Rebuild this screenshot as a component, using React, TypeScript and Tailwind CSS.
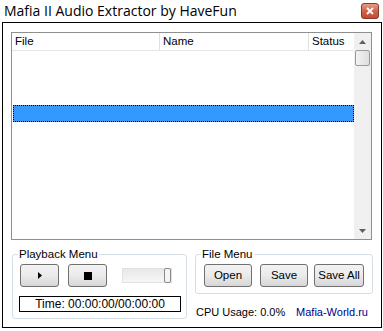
import React from "react"

const sans = { fontFamily: '"Liberation Sans", Arial, sans-serif' }

function Btn({ w, children }: { w: string; children: React.ReactNode }) {
  return (
    <div
      className={`${w} h-[23px] flex items-center justify-center rounded-[3px] border border-[#707070] bg-[#e5e5e5] bg-linear-to-b from-[#f2f2f2] via-[#ebebeb] to-[#d6d6d6] text-[11.5px] text-black`}
    >
      {children}
    </div>
  )
}

function GroupBox({
  label,
  className,
  children,
}: {
  label: string
  className: string
  children: React.ReactNode
}) {
  return (
    <div className={`relative rounded-[3px] border border-[#d5dfe5] ${className}`}>
      <span className="absolute -top-[8px] left-[5px] bg-white px-[1px] text-[11.5px] leading-[14px] text-black">
        {label}
      </span>
      {children}
    </div>
  )
}

function CloseButton() {
  return (
    <svg width="18" height="16" viewBox="0 0 18 16">
      <defs>
        <linearGradient id="cb" x1="0" y1="0" x2="0" y2="1">
          <stop offset="0" stopColor="#e8a08c" />
          <stop offset="0.5" stopColor="#d0634a" />
          <stop offset="1" stopColor="#c24a30" />
        </linearGradient>
      </defs>
      <rect x="0.5" y="0.5" width="17" height="15" rx="2.5" fill="url(#cb)" stroke="#8c3a2c" />
      <path d="M6 5 L12 11 M12 5 L6 11" stroke="white" strokeWidth="1.8" />
    </svg>
  )
}

export default function App() {
  return (
    <div className="w-[383px] h-[331px] bg-white overflow-hidden text-black" style={sans}>
      {/* title bar */}
      <div className="h-[22px] flex items-center justify-between pl-[4px] pr-[4px]">
        <span className="text-[14px] leading-none text-black" style={{ fontFamily: '"Open Sans", sans-serif' }}>
          Mafia II Audio Extractor by HaveFun
        </span>
        <CloseButton />
      </div>

      {/* client */}
      <div className="ml-[2px] w-[380px] h-[306px] border border-black flex flex-col">
        {/* list view */}
        <div className="mt-[9px] ml-[8px] w-[361px] h-[208px] border border-[#8e8f8f] flex">
          <div className="flex-1 flex flex-col">
            <div className="h-[18px] flex border-b border-[#e5e5e5] text-[11.5px] leading-[17px]">
              <div className="w-[148px] border-r border-[#dfdfdf] pl-[3px]">File</div>
              <div className="w-[149px] border-r border-[#dfdfdf] pl-[3px]">Name</div>
              <div className="flex-1 pl-[3px]">Status</div>
            </div>
            <div className="mt-[54px] ml-[1px] h-[17px] bg-[#3399ff] border border-dotted border-black" />
          </div>
          {/* scrollbar */}
          <div className="w-[17px] bg-[#f0f0f0] flex flex-col items-center">
            <div className="h-[17px] flex items-center justify-center">
              <svg width="7" height="4" viewBox="0 0 7 4">
                <path d="M0 4 L3.5 0 L7 4 Z" fill="#606060" />
              </svg>
            </div>
            <div className="w-[15px] h-[16px] rounded-[2px] border border-[#9a9a9a] bg-linear-to-r from-[#f3f3f3] to-[#dedede]" />
            <div className="flex-1" />
            <div className="h-[17px] flex items-center justify-center">
              <svg width="7" height="4" viewBox="0 0 7 4">
                <path d="M0 0 L3.5 4 L7 0 Z" fill="#606060" />
              </svg>
            </div>
          </div>
        </div>

        {/* bottom */}
        <div className="mt-[14px] ml-[9px] flex gap-[8px]">
          <GroupBox label="Playback Menu" className="w-[175px] h-[65px] pt-[9px] pl-[7px]">
            <div className="flex items-center">
              <Btn w="w-[39px]">
                <svg width="4" height="7" viewBox="0 0 4 7">
                  <path d="M0 0 L4 3.5 L0 7 Z" fill="black" />
                </svg>
              </Btn>
              <div className="ml-[9px]">
                <Btn w="w-[39px]">
                  <div className="w-[8px] h-[8px] bg-black" />
                </Btn>
              </div>
              <div className="ml-[15px] w-[50px] h-[15px] bg-linear-to-b from-[#e8e8e8] to-[#f6f6f6] border border-[#e0e0e0] flex justify-end">
                <div className="w-[7px] h-[15px] -mt-px rounded-[2px] border border-[#8a8a8a] bg-[#f4f4f4]" />
              </div>
            </div>
            <div className="mt-[9px] -ml-px w-[162px] h-[16px] border border-black flex items-center justify-center text-[12px] leading-none">
              Time: 00:00:00/00:00:00
            </div>
          </GroupBox>

          <div className="flex flex-col">
            <GroupBox label="File Menu" className="w-[178px] h-[40px] pt-[9px] pl-[8px]">
              <div className="flex">
                <Btn w="w-[48px]">Open</Btn>
                <div className="ml-[8px]">
                  <Btn w="w-[48px]">Save</Btn>
                </div>
                <div className="ml-[6px]">
                  <Btn w="w-[50px]">Save All</Btn>
                </div>
              </div>
            </GroupBox>
            <div className="mt-[11px] flex justify-between pl-[1px] pr-[5px] text-[11px] leading-[14px]">
              <span>CPU Usage: 0.0%</span>
              <span className="text-[#00008b]">Mafia-World.ru</span>
            </div>
          </div>
        </div>
      </div>
    </div>
  )
}
